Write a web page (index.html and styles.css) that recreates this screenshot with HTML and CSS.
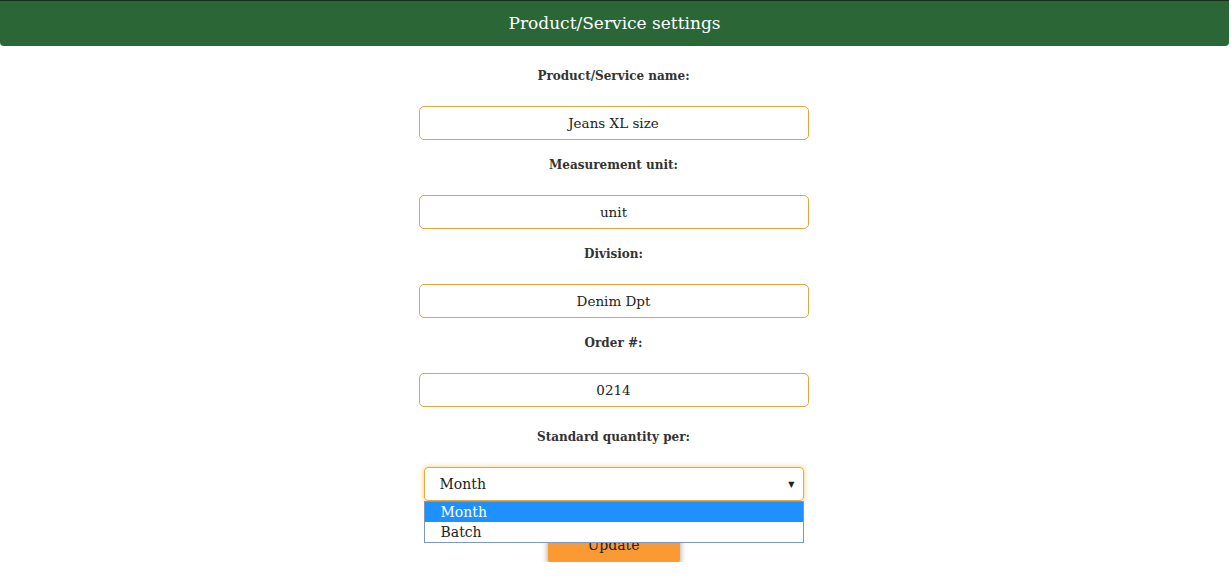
FILE: index.html
```html
<!DOCTYPE html>
<html lang="en">
<head>
<meta charset="utf-8">
<title>Product/Service settings</title>
<link rel="stylesheet" href="styles.css">
</head>
<body>
<div class="page">
  <header class="topbar">Product/Service settings</header>
  <form class="form">
    <div class="field">
      <label class="label">Product/Service name:</label>
      <div class="input">Jeans XL size</div>
    </div>
    <div class="field">
      <label class="label">Measurement unit:</label>
      <div class="input">unit</div>
    </div>
    <div class="field">
      <label class="label">Division:</label>
      <div class="input">Denim Dpt</div>
    </div>
    <div class="field">
      <label class="label">Order #:</label>
      <div class="input">0214</div>
    </div>
    <div class="field field-select">
      <label class="label">Standard quantity per:</label>
      <div class="select-wrap">
        <div class="select"><span>Month</span><span class="arrow">▼</span></div>
        <ul class="options">
          <li class="option selected">Month</li>
          <li class="option">Batch</li>
        </ul>
      </div>
    </div>
    <div class="actions">
      <button type="button" class="btn">Update</button>
    </div>
  </form>
</div>
</body>
</html>
```
FILE: styles.css
```css
* { box-sizing: border-box; }
html, body { margin: 0; padding: 0; background: #fff; }
body {
  font-family: "DejaVu Serif", serif;
  color: #222;
  overflow: hidden;
}
.page { width: 1229px; }
.topbar {
  height: 46px;
  background: #2b6636;
  border-top: 1px solid #17301c;
  border-radius: 0 0 4px 4px;
  color: #fff;
  font-size: 17px;
  line-height: 44px;
  text-align: center;
}
.form {
  display: flex;
  flex-direction: column;
  align-items: center;
  padding-top: 20px;
  padding-right: 2px;
}
.field {
  width: 390px;
  display: flex;
  flex-direction: column;
  align-items: center;
  margin-bottom: 15px;
}
.label {
  display: block;
  height: 20px;
  line-height: 20px;
  font-size: 12px;
  font-weight: bold;
  color: #333;
  margin-bottom: 20px;
}
.input {
  width: 390px;
  height: 34px;
  border: 1px solid #e3a53c;
  border-radius: 5px;
  text-align: center;
  line-height: 32px;
  font-size: 13.5px;
  color: #222;
}
.field-select { margin-top: 5px; margin-bottom: 0; }
.select-wrap { position: relative; width: 380px; }
.select {
  width: 380px;
  height: 34px;
  border: 1px solid #eaa73a;
  border-radius: 4px;
  box-shadow: 0 0 4px 1px rgba(250, 190, 80, 0.6);
  display: flex;
  align-items: center;
  justify-content: space-between;
  padding: 0 8px 0 15px;
  font-size: 14px;
  color: #222;
}
.arrow { font-size: 8px; color: #222; }
.options {
  position: absolute;
  left: 0;
  top: 34px;
  width: 380px;
  margin: 0;
  padding: 0;
  list-style: none;
  border: 1px solid #7a98c4;
  background: #fff;
  z-index: 2;
}
.option {
  height: 20px;
  line-height: 20px;
  padding-left: 16px;
  font-size: 14px;
  color: #222;
}
.option.selected { background: #1e90ff; color: #fff; }
.actions { margin-top: 27px; }
.btn {
  width: 132px;
  height: 34px;
  border: none;
  border-radius: 3px;
  background: #fb9a32;
  box-shadow: 0 4px 6px rgba(0, 0, 0, 0.4);
  font-family: "DejaVu Serif", serif;
  font-size: 14px;
  color: #222;
}
```
